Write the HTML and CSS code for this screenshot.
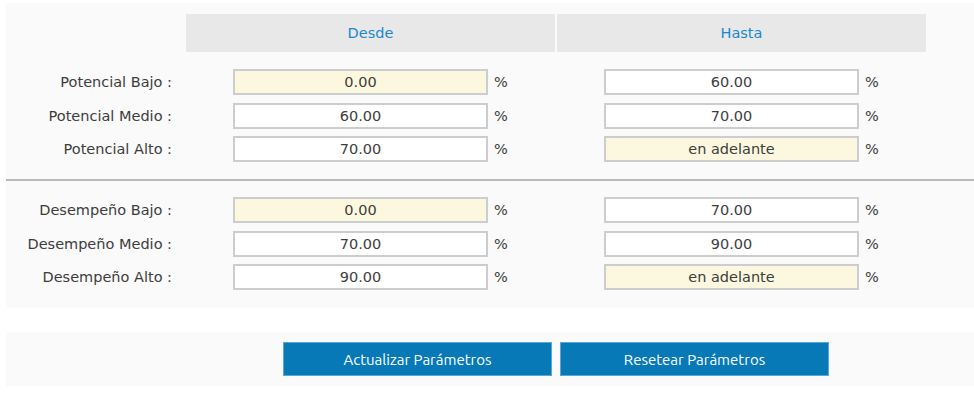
FILE: index.html
```html
<!DOCTYPE html>
<html lang="es">
<head>
    <meta charset="UTF-8">
    <title>Parámetros de Evaluación</title>
    <link rel="stylesheet" href="styles.css">
</head>
<body>
    <div class="page">
        <div class="panel params">
            <div class="grid head">
                <div></div>
                <div class="th">Desde</div>
                <div class="th">Hasta</div>
            </div>

            <div class="grid group">
                <label class="lbl">Potencial Bajo :</label>
                <div class="cell"><input class="field locked" value="0.00" readonly><span class="pct">%</span></div>
                <div class="cell"><input class="field" value="60.00"><span class="pct">%</span></div>

                <label class="lbl">Potencial Medio :</label>
                <div class="cell"><input class="field" value="60.00"><span class="pct">%</span></div>
                <div class="cell"><input class="field" value="70.00"><span class="pct">%</span></div>

                <label class="lbl">Potencial Alto :</label>
                <div class="cell"><input class="field" value="70.00"><span class="pct">%</span></div>
                <div class="cell"><input class="field locked" value="en adelante" readonly><span class="pct">%</span></div>
            </div>

            <hr class="sep">

            <div class="grid group last">
                <label class="lbl">Desempeño Bajo :</label>
                <div class="cell"><input class="field locked" value="0.00" readonly><span class="pct">%</span></div>
                <div class="cell"><input class="field" value="70.00"><span class="pct">%</span></div>

                <label class="lbl">Desempeño Medio :</label>
                <div class="cell"><input class="field" value="70.00"><span class="pct">%</span></div>
                <div class="cell"><input class="field" value="90.00"><span class="pct">%</span></div>

                <label class="lbl">Desempeño Alto :</label>
                <div class="cell"><input class="field" value="90.00"><span class="pct">%</span></div>
                <div class="cell"><input class="field locked" value="en adelante" readonly><span class="pct">%</span></div>
            </div>
        </div>

        <div class="panel actions">
            <button class="btn">Actualizar Parámetros</button>
            <button class="btn">Resetear Parámetros</button>
        </div>
    </div>
</body>
</html>
```

FILE: styles.css
```css
body {
    margin: 0;
    background: #ffffff;
    font-family: "DejaVu Sans", Verdana, sans-serif;
    font-size: 14.5px;
    color: #3d3d3d;
}

.page {
    padding: 3px 0 0 6px;
}

.panel {
    background: #fafafa;
}

.params {
    padding: 11px 0 18px 0;
}

.grid {
    display: grid;
    grid-template-columns: 178px 369px 369px;
    column-gap: 2px;
}

.head {
    height: 38px;
    margin-bottom: 17px;
}

.th {
    background: #e8e8e8;
    color: #1b87cf;
    display: flex;
    align-items: center;
    justify-content: center;
}

.group {
    row-gap: 7.5px;
}

.lbl {
    text-align: right;
    padding-right: 12px;
    align-self: center;
    white-space: nowrap;
}

.cell {
    display: flex;
    align-items: center;
    padding-left: 47px;
}

.field {
    box-sizing: border-box;
    width: 255px;
    height: 26px;
    border: 2px solid #cdcdcd;
    background: #ffffff;
    text-align: center;
    font-family: "DejaVu Sans", Verdana, sans-serif;
    font-size: 14.5px;
    color: #3d3d3d;
    padding: 0;
    outline: none;
}

.field.locked {
    background: #fcf8df; /* readonly */
}

.pct {
    margin-left: 6px;
}

.sep {
    border: 0;
    border-top: 2px solid #b9b9b9;
    margin: 17px 0 16px 0;
}

.actions {
    margin-top: 24px;
    padding: 10px 0 10px 277px;
    display: flex;
    gap: 8px;
}

.btn {
    width: 269px;
    height: 34px;
    background: #0779b7;
    border: 1px solid #5aa6d6;
    color: #ffffff;
    font-family: "Ubuntu", "DejaVu Sans Condensed", "Liberation Sans Narrow", sans-serif;
    font-size: 15px;
    cursor: pointer;
}

.btn:hover {
    background: #066aa0;
}
```
